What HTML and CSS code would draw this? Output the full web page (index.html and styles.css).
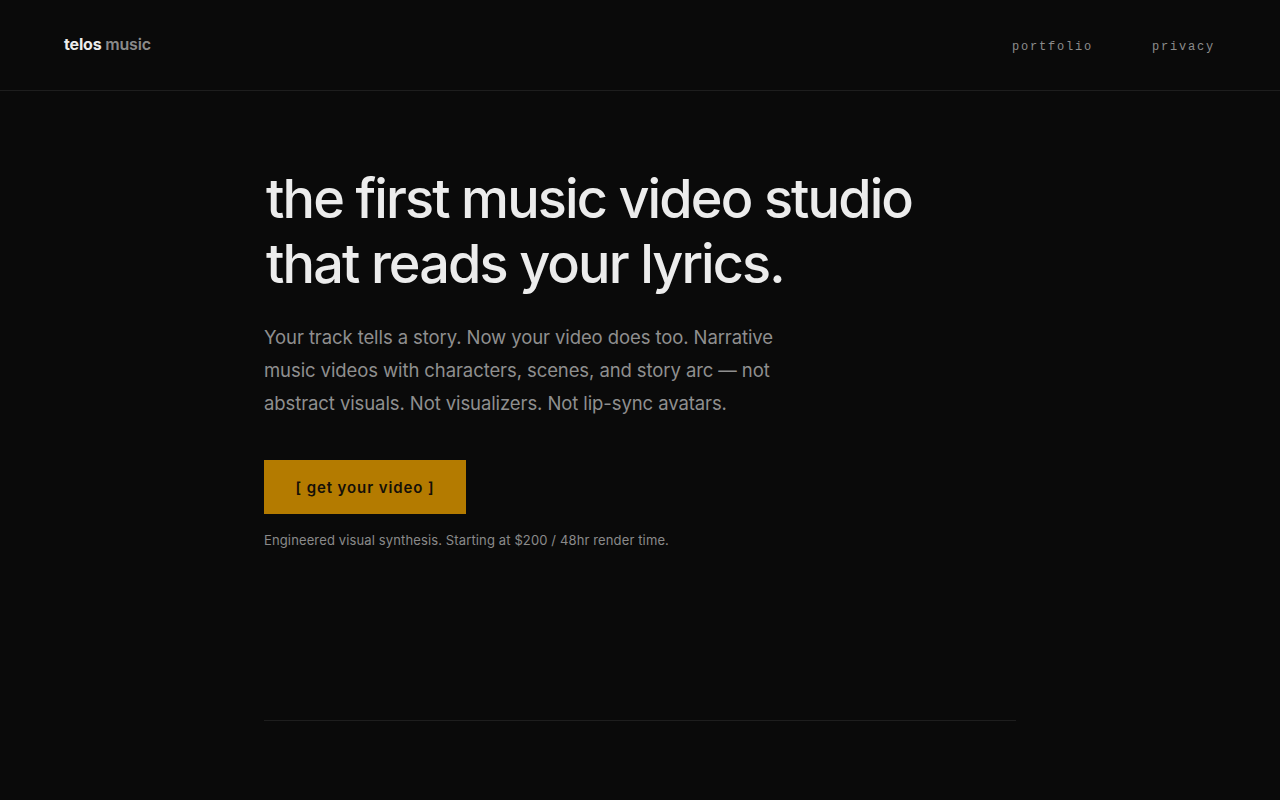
FILE: index.html
```html
<!DOCTYPE html>
<html lang="en">
<head>
<meta charset="utf-8">
<title>telos music</title>
<link rel="stylesheet" href="styles.css">
</head>
<body>
<header class="site-header">
  <a class="logo" href="#"><span class="logo-main">telos</span> <span class="logo-sub">music</span></a>
  <nav class="nav">
    <a href="#">portfolio</a>
    <a href="#">privacy</a>
  </nav>
</header>
<main class="hero">
  <h1 class="headline">the first music video studio<br>that reads your lyrics.</h1>
  <p class="lede">Your track tells a story. Now your video does too. Narrative music videos with characters, scenes, and story arc — not abstract visuals. Not visualizers. Not lip-sync avatars.</p>
  <a class="cta" href="#">[ get your video ]</a>
  <p class="note">Engineered visual synthesis. Starting at $200 / 48hr render time.</p>
  <div class="divider"></div>
</main>
</body>
</html>
```
FILE: styles.css
```css
* { box-sizing: border-box; }
html, body { margin: 0; padding: 0; }
body {
  background: #0a0a0a;
  color: #e8e8e8;
  font-family: Inter, "Noto Sans", sans-serif;
  min-height: 800px;
}
a { text-decoration: none; color: inherit; }

.site-header {
  height: 91px;
  border-bottom: 1px solid #1e1e1e;
  display: flex;
  align-items: center;
  justify-content: space-between;
  padding: 0 65px 0 64px;
}
.logo {
  font-size: 16px;
  font-weight: 700;
  letter-spacing: -0.01em;
  margin-top: -2px;
}
.logo-main { color: #ececec; }
.logo-sub { color: #8a8a8a; font-weight: 600; }
.nav {
  display: flex;
  gap: 59px;
  margin-top: 3px;
}
.nav a {
  font-family: "Liberation Mono", "DejaVu Sans Mono", monospace;
  font-size: 12px;
  letter-spacing: 0.15em;
  color: #8c8c8c;
}

.hero {
  width: 752px;
  margin: 0 auto;
  padding-top: 75px;
}
.headline {
  margin: 0 0 0 2px;
  font-size: 54px;
  font-weight: 500;
  line-height: 65px;
  letter-spacing: -0.035em;
  color: #ececec;
}
.lede {
  margin: 25px 0 0;
  width: 520px;
  font-size: 18.5px;
  line-height: 33px;
  color: #8f8f8f;
  letter-spacing: -0.005em;
}
.cta {
  display: inline-flex;
  align-items: center;
  justify-content: center;
  margin-top: 40px;
  width: 202px;
  height: 54px;
  background: #b47b00;
  color: #141008;
  font-size: 15px;
  font-weight: 600;
  letter-spacing: 0.06em;
}
.note {
  margin: 18px 0 0;
  font-size: 13px;
  letter-spacing: 0.01em;
  color: #8a8a8a;
}
.divider {
  margin-top: 172px;
  height: 1px;
  background: #1e1e1e;
}
```
